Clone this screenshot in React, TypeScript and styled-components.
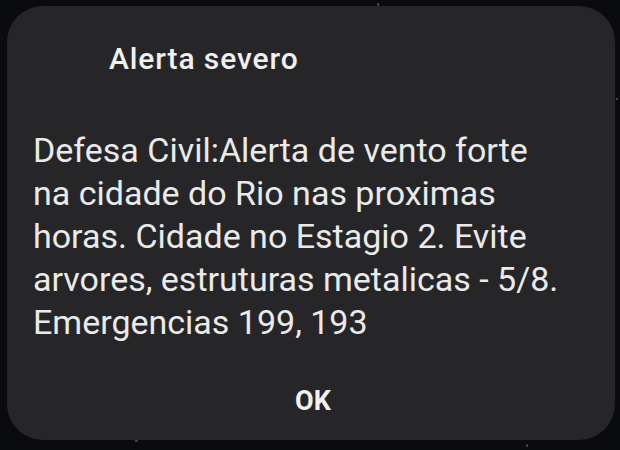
import React from "react";
import styled, { createGlobalStyle } from "styled-components";

const Global = createGlobalStyle`
  html, body { margin: 0; padding: 0; background: #0a0b0e; }
  body { width: 620px; height: 450px; overflow: hidden; font-family: Roboto, "Noto Sans", sans-serif; }
`;

const Screen = styled.div`
  width: 620px;
  height: 450px;
  box-sizing: border-box;
  padding: 6px 5px 10px 7px;
  background:
    radial-gradient(circle at 8% 96%, rgba(200,210,230,0.35) 0 1px, transparent 1.5px),
    radial-gradient(circle at 22% 98%, rgba(200,210,230,0.3) 0 1px, transparent 1.5px),
    radial-gradient(circle at 61% 1%, rgba(200,210,230,0.3) 0 1px, transparent 1.5px),
    radial-gradient(circle at 99.5% 22%, rgba(200,210,230,0.3) 0 1px, transparent 1.5px),
    radial-gradient(circle at 85% 99%, rgba(200,210,230,0.3) 0 1px, transparent 1.5px),
    #0a0b0e;
`;

const Dialog = styled.div`
  box-sizing: border-box;
  height: 434px;
  background: #262628;
  border-radius: 36px;
  padding: 35px 22px 0 26px;
  display: flex;
  flex-direction: column;
  color: #ececec;
`;

const Title = styled.h1`
  margin: 0 0 0 76px;
  font-size: 30px;
  font-weight: 500;
  line-height: 36px;
  letter-spacing: 0.9px;
  color: #f0f0f0;
`;

const Body = styled.p`
  margin: 52px 0 0 0;
  font-size: 34px;
  line-height: 43px;
  font-weight: 400;
  color: #eaeaea;
  white-space: nowrap;
`;

const Button = styled.button`
  align-self: center;
  margin: 42px 0 0 0;
  background: none;
  border: 0;
  padding: 0;
  font-family: inherit;
  font-size: 27px;
  line-height: 30px;
  font-weight: 700;
  color: #f0f0f0;
`;

export default function App() {
  return (
    <>
      <Global />
      <Screen>
        <Dialog>
          <Title>Alerta severo</Title>
          <Body>
            Defesa Civil:Alerta de vento forte
            <br />
            na cidade do Rio nas proximas
            <br />
            horas. Cidade no Estagio 2. Evite
            <br />
            arvores, estruturas metalicas - 5/8.
            <br />
            Emergencias 199, 193
          </Body>
          <Button>OK</Button>
        </Dialog>
      </Screen>
    </>
  );
}
